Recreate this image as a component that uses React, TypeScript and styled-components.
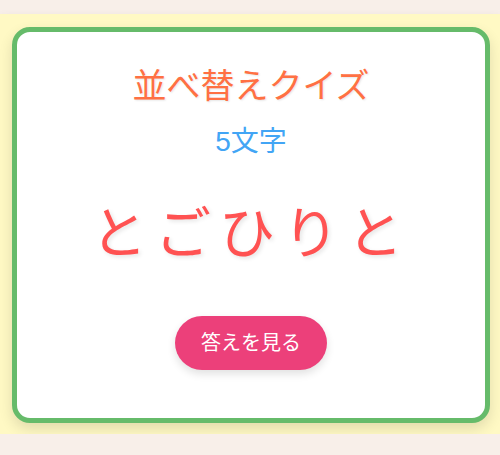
import React from 'react';
import styled, { createGlobalStyle } from 'styled-components';

const GlobalStyle = createGlobalStyle`
  html, body {
    margin: 0;
    padding: 0;
    background: #f8efe9;
    font-family: "Liberation Sans", "Noto Sans CJK JP", sans-serif;
  }
`;

const Stage = styled.div`
  margin-top: 14px;
  height: 420px;
  box-sizing: border-box;
  padding: 13px 10px 11px 12px;
  background: #fff9c4;
  box-shadow: 0 2px 8px rgba(0, 0, 0, 0.06);
`;

const Card = styled.div`
  height: 100%;
  box-sizing: border-box;
  background: #fff;
  border: 5px solid #66bb6a;
  border-radius: 18px;
  box-shadow: 0 6px 14px rgba(0, 0, 0, 0.12);
  display: flex;
  flex-direction: column;
  align-items: center;
  padding-top: 34px;
`;

const Title = styled.h1`
  margin: 0;
  font-size: 34px;
  font-weight: 400;
  line-height: 1.2;
  color: #ff7043;
  text-shadow: 1px 1px 2px rgba(0, 0, 0, 0.1);
`;

const Count = styled.div`
  margin-top: 18px;
  font-size: 28px;
  line-height: 1.2;
  color: #42a5f5;
`;

const Letters = styled.div`
  margin-top: 42px;
  font-size: 56px;
  line-height: 1.2;
  letter-spacing: 8px;
  color: #ff5252;
  text-shadow: 2px 2px 4px rgba(0, 0, 0, 0.1);
`;

const AnswerButton = styled.button`
  margin-top: 48px;
  border: none;
  border-radius: 999px;
  background: #ec407a;
  color: #fff;
  font-family: inherit;
  font-size: 20px;
  line-height: 1.3;
  padding: 14px 26px;
  box-shadow: 0 4px 8px rgba(0, 0, 0, 0.12);
  cursor: pointer;
`;

export default function App() {
  return (
    <>
      <GlobalStyle />
      <Stage>
        <Card>
          <Title>並べ替えクイズ</Title>
          <Count>5文字</Count>
          <Letters>とごひりと</Letters>
          <AnswerButton>答えを見る</AnswerButton>
        </Card>
      </Stage>
    </>
  );
}
